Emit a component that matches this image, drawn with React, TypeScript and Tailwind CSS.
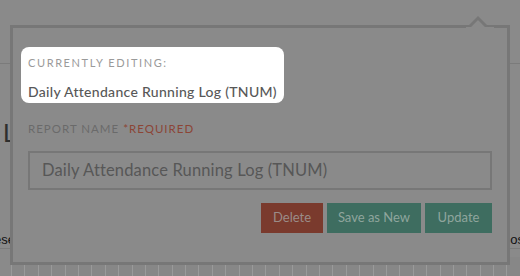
export default function App() {
  const cells = Array.from({ length: 40 });
  return (
    <div className="relative w-[520px] h-[276px] overflow-hidden bg-[#8a8a8a] font-['Lato','Liberation_Sans',sans-serif]">
      {/* page behind the overlay */}
      <div className="flex flex-col h-full">
        <div className="h-[66px] border-b border-[#7b7b7b]" />
        <div className="pl-[3px] pt-[56px] h-[100px] text-[26px] leading-none text-[#2e2e2e] font-['Liberation_Sans',sans-serif]">
          L
        </div>
        <div className="flex justify-between items-end h-[88px] pb-[2px] border-b border-[#7b7b7b] text-[13px] leading-none text-[#111] font-['Liberation_Sans',sans-serif]">
          <span className="-ml-[6px]">ese</span>
          <span className="-mr-[4px]">os</span>
        </div>
        <div className="flex mt-[8px] ml-[11px] h-[20px]">
          {cells.map((_, i) => (
            <div key={i} className="w-[13.4px] shrink-0 border-l border-[#9a9a9a] bg-[#878787]" />
          ))}
        </div>
      </div>

      {/* popover */}
      <div className="absolute left-[10px] top-[25px] w-[500px] h-[240px] border-[3px] border-[#777777] bg-[#8a8a8a]">
        <svg className="absolute -top-[14px] left-[453px]" width="28" height="16" viewBox="0 0 28 16">
          <polyline points="1,15 12,4 23,15" fill="#8a8a8a" stroke="#777777" strokeWidth="3" />
          <rect x="0" y="13" width="28" height="4" fill="#8a8a8a" />
        </svg>
        <div className="px-[15px] pt-[19px]">
          <div className="-mx-[7px] w-[263px] h-[56px] rounded-[8px] bg-white px-[7px] pt-[9px]">
            <div className="text-[11px] leading-[14px] tracking-[1.6px] text-[#9a9a9a]">CURRENTLY EDITING:</div>
            <div className="mt-[14px] whitespace-nowrap text-[14px] leading-[16px] tracking-[0.3px] text-[#585858] font-medium">
              Daily Attendance Running Log (TNUM)
            </div>
          </div>
          <div className="mt-[19px] text-[11.5px] leading-[14px] tracking-[1px] text-[#6a6a6a]">
            REPORT NAME <span className="text-[#8c4536]">*REQUIRED</span>
          </div>
          <div className="mt-[15px] h-[39px] border-2 border-[#777777] flex items-center px-[12px] whitespace-nowrap text-[16.5px] tracking-[0.15px] text-[#575757]">
            Daily Attendance Running Log (TNUM)
          </div>
          <div className="mt-[13px] flex justify-end gap-[4px]">
            <button className="w-[62px] h-[30px] bg-[#7a3a2d] text-[13px] text-[#9a8c88]">Delete</button>
            <button className="w-[94px] h-[30px] bg-[#3e6d60] text-[13px] text-[#8fa59d]">Save as New</button>
            <button className="w-[67px] h-[30px] bg-[#3e6d60] text-[13px] text-[#8fa59d]">Update</button>
          </div>
        </div>
      </div>
    </div>
  );
}
